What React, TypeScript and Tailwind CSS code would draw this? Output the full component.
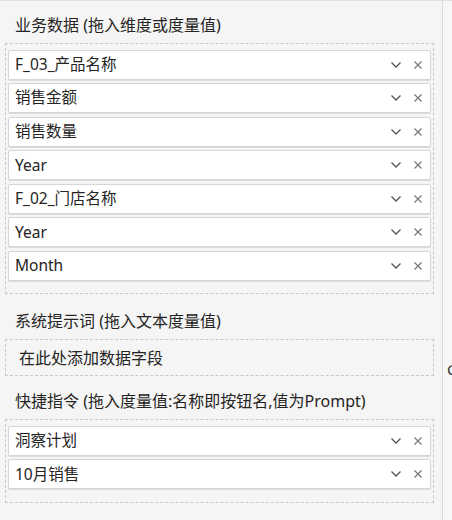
import React from 'react';

const FONT = '"Noto Sans", "Noto Sans CJK SC", sans-serif';

function Chevron() {
  return (
    <svg width="12" height="8" viewBox="0 0 12 8" className="text-[#555]">
      <path d="M1.5 1.5 L6 6 L10.5 1.5" fill="none" stroke="currentColor" strokeWidth="1.3" />
    </svg>
  );
}

function Cross() {
  return (
    <svg width="10" height="10" viewBox="0 0 10 10" className="text-[#777]">
      <path d="M1.5 1.5 L8.5 8.5 M8.5 1.5 L1.5 8.5" fill="none" stroke="currentColor" strokeWidth="1.2" />
    </svg>
  );
}

function FieldItem({ label }: { label: string }) {
  return (
    <div className="h-[30px] flex items-center bg-white border border-[#d6d6d6] shadow-[0_1px_0_#dcdcdc] rounded-[2px] pl-[6px] pr-[7px]">
      <span className="flex-1 text-[15.5px] text-[#252423] truncate">{label}</span>
      <span className="mr-[11px] flex items-center"><Chevron /></span>
      <Cross />
    </div>
  );
}

function Well({ title, items, placeholder, titleTop, padBottom }: { title: string; items?: string[]; placeholder?: string; titleTop: string; padBottom?: string }) {
  return (
    <div>
      <div className={`${titleTop} pl-[15px] text-[16px] text-[#252423] leading-[20px]`}>{title}</div>
      {items ? (
        <div className={`mt-[8px] ml-[5px] mr-[8px] border border-dashed border-[#c8c8c8] pt-[5.5px] ${padBottom ?? 'pb-[12px]'} px-[2px] flex flex-col gap-[3.6px]`}>
          {items.map((it, i) => (
            <FieldItem key={i} label={it} />
          ))}
        </div>
      ) : (
        <div className="mt-[8px] ml-[5px] mr-[8px] h-[37px] border border-dashed border-[#c8c8c8] flex items-center pl-[13px] text-[16px] text-[#252423]">
          {placeholder}
        </div>
      )}
    </div>
  );
}

export default function App() {
  return (
    <div className="w-[452px] h-[520px] bg-[#f5f5f5] flex overflow-hidden border-t border-[#e1e1e1]" style={{ fontFamily: FONT }}>
      <div className="w-[443px] border-r border-[#d9d9d9]">
        <Well
          titleTop="mt-[14px]"
          title="业务数据 (拖入维度或度量值)"
          items={['F_03_产品名称', '销售金额', '销售数量', 'Year', 'F_02_门店名称', 'Year', 'Month']}
        />
        <Well titleTop="mt-[17px]" title="系统提示词 (拖入文本度量值)" placeholder="在此处添加数据字段" />
        <Well
          titleTop="mt-[15px]"
          title="快捷指令 (拖入度量值:名称即按钮名,值为Prompt)"
          items={['洞察计划', '10月销售']}
          padBottom="pb-[13px]"
        />
      </div>
      <div className="flex-1 relative bg-[#f7f7f7]">
        <span className="absolute left-[4px] top-[357px] text-[15px] text-[#333]">C</span>
      </div>
    </div>
  );
}
